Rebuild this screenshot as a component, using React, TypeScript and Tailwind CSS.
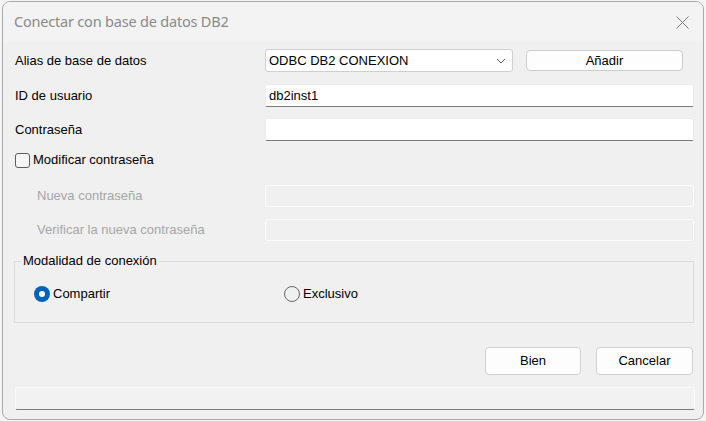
import React from "react";

const font = { fontFamily: '"Liberation Sans", Arial, sans-serif' };

function Chevron() {
  return (
    <svg width="10" height="6" viewBox="0 0 10 6" fill="none">
      <path d="M1 1 L5 5 L9 1" stroke="#5f5f5f" strokeWidth="1" />
    </svg>
  );
}

export default function App() {
  return (
    <div className="w-[706px] h-[421px] bg-[#f4f4f4] pt-[1px] pl-[2px] overflow-hidden" style={font}>
      <div className="w-[702px] h-[419px] rounded-[8px] border border-[#a9a9a9] bg-[#f0f0f0] overflow-hidden flex flex-col text-[13px] text-black">
        {/* Title bar */}
        <div className="h-[40px] bg-[#f3f3f3] flex items-center justify-between pl-[11px] pr-[14px] shrink-0">
          <span className="text-[14.5px] text-[#8a8a8a] tracking-[-0.2px]" style={{ fontFamily: '"Noto Sans", "Liberation Sans", sans-serif' }}>
            Conectar con base de datos DB2
          </span>
          <svg width="13" height="13" viewBox="0 0 13 13">
            <path d="M0.5 0.5 L12.5 12.5 M12.5 0.5 L0.5 12.5" stroke="#7a7a7a" strokeWidth="1" />
          </svg>
        </div>

        {/* Body */}
        <div className="pl-[11px] pr-[9px] flex flex-col">
          {/* Row 1 */}
          <div className="mt-[7px] h-[23px] flex items-center">
            <div className="w-[251px] pl-px">Alias de base de datos</div>
            <div className="w-[248px] h-[23px] bg-white border border-[#cfcfcf] rounded-[3px] flex items-center justify-between pl-[3px] pr-[6px]">
              <span>ODBC DB2 CONEXION</span>
              <Chevron />
            </div>
            <button className="ml-[13px] w-[157px] h-[21px] bg-[#fdfdfd] border border-[#cdcdcd] rounded-[4px] flex items-center justify-center">
              Añadir
            </button>
          </div>

          {/* Row 2 */}
          <div className="mt-[12px] h-[23px] flex items-center">
            <div className="w-[251px] pl-px">ID de usuario</div>
            <div className="flex-1 h-[23px] bg-white border border-[#ececec] border-b-[#7b7b7b] rounded-[2px] flex items-center pl-[3px]">
              db2inst1
            </div>
          </div>

          {/* Row 3 */}
          <div className="mt-[11px] h-[23px] flex items-center">
            <div className="w-[251px] pl-px">Contraseña</div>
            <div className="flex-1 h-[23px] bg-white border border-[#ececec] border-b-[#7b7b7b] rounded-[2px]" />
          </div>

          {/* Row 4 checkbox */}
          <div className="mt-[11px] h-[16px] flex items-center">
            <div className="ml-px w-[15px] h-[15px] rounded-[3px] border border-[#5c5c5c] bg-[#f6f6f6]" />
            <span className="ml-[3px]">Modificar contraseña</span>
          </div>

          {/* Row 5 */}
          <div className="mt-[17px] h-[22px] flex items-center">
            <div className="w-[251px] pl-[23px] text-[#a6a6a6]">Nueva contraseña</div>
            <div className="flex-1 h-[22px] border border-[#fbfbfb] rounded-[2px]" />
          </div>

          {/* Row 6 */}
          <div className="mt-[12px] h-[22px] flex items-center">
            <div className="w-[251px] pl-[23px] text-[#a6a6a6]">Verificar la nueva contraseña</div>
            <div className="flex-1 h-[22px] border border-[#fbfbfb] rounded-[2px]" />
          </div>

          {/* Group box */}
          <fieldset className="mt-[12px] w-[680px] h-[70px] border border-[#d9d9d9] rounded-[1px]">
            <legend className="ml-[6px] px-[2px] leading-[16px]">Modalidad de conexión</legend>
            <div className="flex items-center h-[16px] mt-[17px]">
              <div className="ml-[19px] w-[16px] h-[16px] rounded-full bg-[#0063b8] flex items-center justify-center">
                <div className="w-[6px] h-[6px] rounded-full bg-white" />
              </div>
              <span className="ml-[3px] w-[231px]">Compartir</span>
              <div className="w-[16px] h-[16px] rounded-full border border-[#686868]" />
              <span className="ml-[3px]">Exclusivo</span>
            </div>
          </fieldset>

          {/* Buttons */}
          <div className="mt-[24px] flex justify-end pr-[1px] gap-[15px]">
            <button className="w-[96px] h-[28px] bg-[#fdfdfd] border border-[#d0d0d0] rounded-[4px]">Bien</button>
            <button className="w-[97px] h-[28px] bg-[#fdfdfd] border border-[#d0d0d0] rounded-[4px]">Cancelar</button>
          </div>

          {/* Status bar */}
          <div className="mt-[12px] ml-[1px] w-[680px] h-[23px] bg-[#f2f2f2] border border-[#fafafa] border-b-[#7d7d7d] rounded-[2px]" />
        </div>
      </div>
    </div>
  );
}
